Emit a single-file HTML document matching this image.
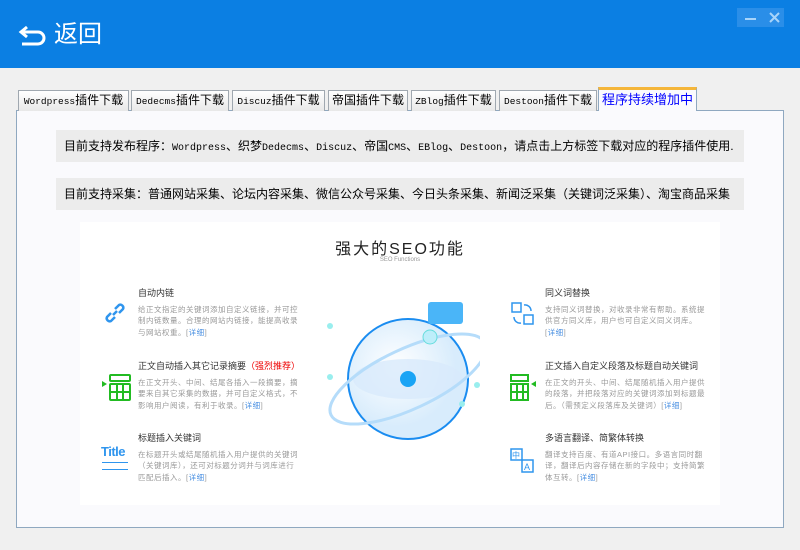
<!DOCTYPE html>
<html><head><meta charset="utf-8"><style>
*{margin:0;padding:0;box-sizing:border-box}
body{width:800px;height:550px;background:#f0f0f0;position:relative;overflow:hidden;font-family:"Liberation Sans","Noto Sans CJK SC",sans-serif}
.hd{position:absolute;left:0;top:0;width:800px;height:68px;background:#0b7fe3}
.hd .t{position:absolute;left:54px;top:20px;color:#fff;font-size:24px;line-height:30px}
.ctl{position:absolute;left:737px;top:8px;width:47px;height:19px;background:#2a8ee8}
.tab{position:absolute;top:90px;height:21px;border:1px solid #a0a8b0;border-bottom:none;background:linear-gradient(#fff,#e8e8e8);font-size:12px;line-height:19px;text-align:center;color:#000;white-space:nowrap;overflow:hidden}
.tab i{font-style:normal;font-family:"Liberation Mono",monospace;font-size:9.5px}
.act{top:87px;height:24px;background:#fafafd;border:1px solid #8fa8c0;border-top:3px solid #f5b63a;border-bottom:none;color:#0000ff;font-size:13px;line-height:20px;z-index:2}
.panel{position:absolute;left:16px;top:110px;width:768px;height:418px;border:1px solid #8fa8c0;background:#fafafd}
.bar{position:absolute;left:56px;width:688px;height:32px;background:#ececec;font-size:12px;line-height:32px;padding-left:8px;color:#000;white-space:nowrap}
.bar i{font-style:normal;font-family:"Liberation Mono",monospace;font-size:10px}
.img{position:absolute;left:80px;top:222px;width:640px;height:283px;background:#fff}
.it{position:absolute;width:162px;font-size:7.5px;letter-spacing:0.5px;line-height:11.6px;color:#999}
.it b{display:block;font-weight:normal;font-size:9px;letter-spacing:0;color:#333;margin-bottom:4px;white-space:nowrap}
.it a{color:#4a90e2}
</style></head><body>
<div class="hd">
<svg style="position:absolute;left:18px;top:24px" width="30" height="22" viewBox="0 0 30 22"><path d="M9 3 L3 8 L9 13 M3 8 H20 a6 6 0 0 1 0 12 H4" fill="none" stroke="#fff" stroke-width="3"/></svg>
<div class="t">返回</div>
<div class="ctl"><div style="position:absolute;left:8px;top:10px;width:11px;height:2px;background:#a8d4fa"></div><svg style="position:absolute;left:32px;top:4px" width="11" height="11"><path d="M1 1L10 10M10 1L1 10" stroke="#a8d4fa" stroke-width="2"/></svg></div>
</div>
<div class="panel"></div>
<div class="tab" style="left:18px;width:111px"><i>Wordpress</i>插件下载</div>
<div class="tab" style="left:131px;width:98px"><i>Dedecms</i>插件下载</div>
<div class="tab" style="left:232px;width:93px"><i>Discuz</i>插件下载</div>
<div class="tab" style="left:328px;width:80px">帝国插件下载</div>
<div class="tab" style="left:411px;width:85px"><i>ZBlog</i>插件下载</div>
<div class="tab" style="left:499px;width:98px"><i>Destoon</i>插件下载</div>
<div class="tab act" style="left:598px;width:99px">程序持续增加中</div>
<div class="bar" style="top:130px">目前支持发布程序：<i>Wordpress</i>、织梦<i>Dedecms</i>、<i>Discuz</i>、帝国<i>CMS</i>、<i>EBlog</i>、<i>Destoon</i>，请点击上方标签下载对应的程序插件使用.</div>
<div class="bar" style="top:178px">目前支持采集：普通网站采集、论坛内容采集、微信公众号采集、今日头条采集、新闻泛采集（关键词泛采集）、淘宝商品采集</div>
<div class="img">
<div style="position:absolute;left:0;width:640px;top:13px;text-align:center;font-size:16px;letter-spacing:2px;color:#222">强大的SEO功能</div>
<div style="position:absolute;left:0;width:640px;top:35px;text-align:center;font-size:6px;color:#999">SEO Functions</div>
<svg style="position:absolute;left:240px;top:75px" width="160" height="150" viewBox="0 0 160 150">
<defs><radialGradient id="g" cx="0.4" cy="0.4"><stop offset="0" stop-color="#fff"/><stop offset="1" stop-color="#d8ecfc"/></radialGradient></defs>
<circle cx="88" cy="82" r="60" fill="url(#g)" stroke="#1a8cf0" stroke-width="2"/>
<ellipse cx="88" cy="82" rx="55" ry="20" fill="#d8eafb" opacity=".8"/>
<ellipse cx="88" cy="82" rx="85" ry="30" fill="none" stroke="#b5dcfa" stroke-width="3" transform="rotate(-25 88 82)"/>
<circle cx="88" cy="82" r="8" fill="#1aa4f5"/>
<rect x="108" y="5" width="35" height="22" rx="3" fill="#4ab5f8"/>
<circle cx="110" cy="40" r="7" fill="#bdeefa" stroke="#6dd"/>
<circle cx="10" cy="29" r="3" fill="#9ee"/><circle cx="10" cy="80" r="3" fill="#9ee"/>
<circle cx="157" cy="88" r="3" fill="#9ee"/><circle cx="142" cy="107" r="3" fill="#9ee"/>
</svg>
<svg style="position:absolute;left:24px;top:80px" width="22" height="22" viewBox="0 0 22 22"><path d="M9 13 L13 9 M7 11 L3 15 a3 3 0 0 0 4 4 L11 15 M15 11 L19 7 a3 3 0 0 0 -4 -4 L11 7" fill="none" stroke="#2f95ee" stroke-width="2.5"/></svg>
<div class="it" style="left:58px;top:66px"><b>自动内链</b>给正文指定的关键词添加自定义链接，并可控制内链数量。合理的网站内链接，能提高收录与网站权重。[<a>详细</a>]</div>
<svg style="position:absolute;left:22px;top:152px" width="30" height="28"><path d="M0 7 L5 10 L0 13Z" fill="#2b2"/><rect x="8" y="1" width="20" height="6" rx="1" fill="none" stroke="#2b2" stroke-width="2"/><rect x="8" y="10" width="20" height="16" rx="1" fill="none" stroke="#2b2" stroke-width="2"/><path d="M8 18H28M15 10V26M21 10V26" stroke="#2b2" stroke-width="2"/></svg>
<div class="it" style="left:58px;top:139px"><b>正文自动插入其它记录摘要<span style="color:#e00">（强烈推荐）</span></b>在正文开头、中间、结尾各插入一段摘要，摘要来自其它采集的数据，并可自定义格式，不影响用户阅读，有利于收录。[<a>详细</a>]</div>
<div style="position:absolute;left:21px;top:222px;color:#2f95ee;font-size:13px;font-weight:bold;letter-spacing:-0.5px">Title</div>
<div style="position:absolute;left:22px;top:240px;width:26px;height:8px;border-top:1px solid #2f95ee;border-bottom:1px solid #2f95ee"></div>
<div class="it" style="left:58px;top:211px"><b>标题插入关键词</b>在标题开头或结尾随机插入用户提供的关键词（关键词库），还可对标题分词并与词库进行匹配后插入。[<a>详细</a>]</div>
<svg style="position:absolute;left:431px;top:80px" width="24" height="24"><rect x="1" y="1" width="9" height="9" fill="none" stroke="#2f95ee" stroke-width="1.5"/><rect x="13" y="13" width="9" height="9" fill="none" stroke="#2f95ee" stroke-width="1.5"/><path d="M13 3 a6 6 0 0 1 7 6 M10 21 a6 6 0 0 1 -7 -6" fill="none" stroke="#2f95ee" stroke-width="1.5"/></svg>
<div class="it" style="left:465px;top:66px"><b>同义词替换</b>支持同义词替换，对收录非常有帮助。系统提供官方同义库，用户也可自定义同义词库。[<a>详细</a>]</div>
<svg style="position:absolute;left:430px;top:152px" width="26" height="28"><path d="M26 7 L21 10 L26 13Z" fill="#2b2"/><rect x="1" y="1" width="17" height="6" fill="none" stroke="#2b2" stroke-width="2"/><rect x="1" y="10" width="17" height="16" fill="none" stroke="#2b2" stroke-width="2"/><path d="M1 18H18M7 10V26M13 10V26" stroke="#2b2" stroke-width="2"/></svg>
<div class="it" style="left:465px;top:139px"><b>正文插入自定义段落及标题自动关键词</b>在正文的开头、中间、结尾随机插入用户提供的段落，并把段落对应的关键词添加到标题最后。（需预定义段落库及关键词）[<a>详细</a>]</div>
<svg style="position:absolute;left:430px;top:226px" width="24" height="26"><rect x="1" y="1" width="11" height="11" fill="none" stroke="#2f95ee" stroke-width="1.5"/><rect x="12" y="12" width="11" height="12" fill="none" stroke="#2f95ee" stroke-width="1.5"/><text x="2" y="10" font-size="8" fill="#2f95ee" font-family="Noto Sans CJK SC">中</text><text x="14" y="22" font-size="9" fill="#2f95ee" font-family="Liberation Sans">A</text></svg>
<div class="it" style="left:465px;top:211px"><b>多语言翻译、简繁体转换</b>翻译支持百度、有道API接口。多语言同时翻译，翻译后内容存储在新的字段中；支持简繁体互转。[<a>详细</a>]</div>
</div>
</body></html>
